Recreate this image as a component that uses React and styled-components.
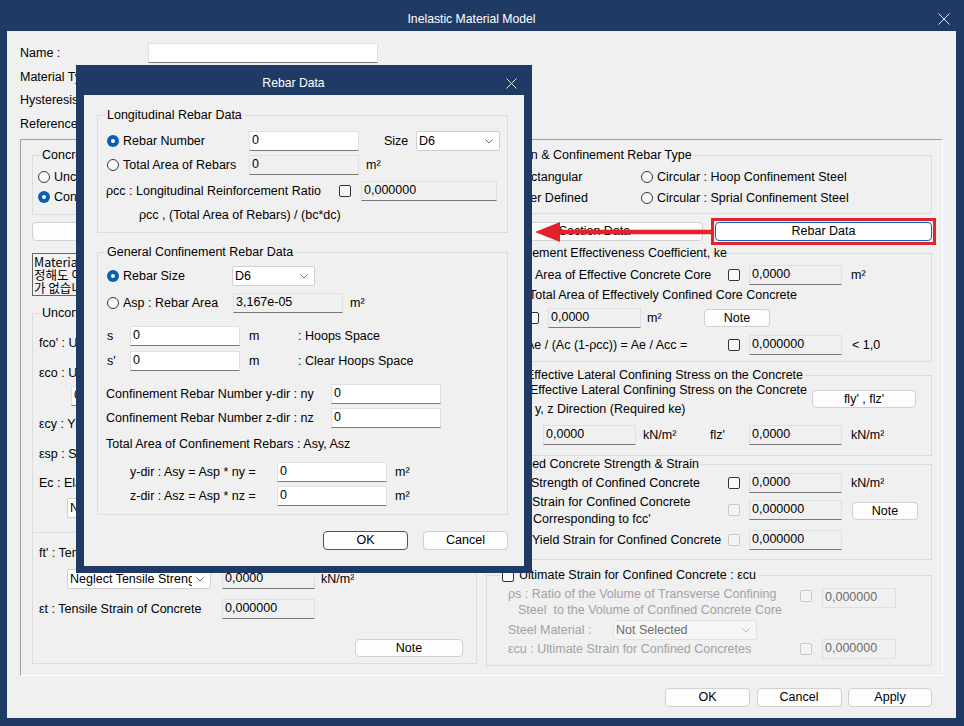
import React from "react"
import styled, { createGlobalStyle, css } from "styled-components"

const BLUE = "#1f3b65"
const RED = "#e5212b"

const GlobalStyle = createGlobalStyle`
  * { box-sizing: border-box; }
  html, body { margin: 0; padding: 0; background: ${BLUE}; }
  body {
    font-family: "Liberation Sans", Arial, sans-serif;
    font-size: 12.5px;
    color: #000;
  }
`

const px = (v, d = 0) => (typeof v === "number" ? v + "px" : v ?? d + "px")

const Window = styled.div`
  position: relative;
  width: 964px;
  height: 726px;
  background: ${BLUE};
  display: flex;
  flex-direction: column;
  overflow: hidden;
`

const TitleBar = styled.div`
  flex-shrink: 0;
  height: ${p => p.$h}px;
  padding-top: 6px;
  display: flex;
  align-items: center;
  color: #fff;
`

const TitleText = styled.div`
  flex: 1;
  text-align: center;
  padding-left: 5px;
  font-size: 12.2px;
`

const CloseSvg = styled.svg`
  flex-shrink: 0;
  margin-right: ${p => p.$mr}px;
`

function CloseIcon({ size, mr }) {
  const e = size - 0.5
  return (
    <CloseSvg $mr={mr} width={size} height={size} viewBox={`0 0 ${size} ${size}`}>
      <path d={`M0.5 0.5L${e} ${e}M${e} 0.5L0.5 ${e}`} stroke="#e4e9f1" strokeWidth="1" />
    </CloseSvg>
  )
}

const Body = styled.div`
  flex: 1;
  margin: 0 8px 8px 7px;
  padding: 12px 13px 0 13px;
  background: #f0f0f0;
  display: flex;
  flex-direction: column;
`

const FormGrid = styled.div`
  display: grid;
  grid-template-columns: 128px 230px;
  grid-auto-rows: 20px;
  row-gap: 3.5px;
  align-items: center;
`

const Frame = styled.div`
  position: relative;
  margin-top: 5.5px;
  height: 537px;
  flex-shrink: 0;
  border-top: 1px solid #a0a0a0;
  border-left: 1px solid #a0a0a0;
  border-right: 1px solid #fff;
  border-bottom: 1px solid #fff;
  padding: 0 9px 0 11px;
  display: grid;
  grid-template-columns: 445px 446px;
  column-gap: 9px;
  align-content: start;
`

const Column = styled.div`
  display: flex;
  flex-direction: column;
  min-width: 0;
`

const Group = styled.div`
  position: relative;
  flex-shrink: 0;
  margin-top: ${p => p.$mt ?? 0}px;
  padding: 0 ${p => p.$pr ?? 6}px ${p => p.$pb ?? 0}px ${p => p.$pl ?? 9}px;
  border: 1px solid #dcdcdc;
  display: flex;
  flex-direction: column;
`

const Legend = styled.div`
  position: absolute;
  top: -8px;
  left: ${p => p.$left ?? 7}px;
  padding: 0 2px;
  line-height: 15px;
  background: #f0f0f0;
  white-space: nowrap;
  display: flex;
  align-items: center;
  gap: 5px;
`

const Row = styled.div`
  flex-shrink: 0;
  display: flex;
  align-items: ${p => (p.$top ? "flex-start" : "center")};
  justify-content: ${p => (p.$end ? "flex-end" : "flex-start")};
  gap: ${p => p.$gap ?? 0}px;
  height: ${p => p.$h ?? 20}px;
  margin-top: ${p => p.$mt ?? 0}px;
  padding-right: ${p => p.$pr ?? 0}px;
  line-height: 15px;
  white-space: nowrap;
`

const Text = styled.span`
  flex-shrink: 0;
  width: ${p => px(p.$w, "auto")};
  margin-left: ${p => p.$ml ?? 0}px;
  color: ${p => (p.$dim ? "#a2a2a2" : "#000")};
  white-space: pre;
  overflow: hidden;
`

const Prefix = styled.span`
  display: inline-block;
  width: ${p => p.$w}px;
  overflow: hidden;
  vertical-align: top;
`

const Lines = styled.div`
  flex-shrink: 0;
  width: ${p => p.$w}px;
  margin-left: ${p => p.$ml ?? 0}px;
  line-height: ${p => p.$lh}px;
  color: ${p => (p.$dim ? "#a2a2a2" : "#000")};
  white-space: pre;
  overflow: hidden;
`

const Line = styled.div`
  padding-left: ${p => p.$indent ?? 0}px;
`

const Choice = styled.span`
  flex-shrink: 0;
  display: flex;
  align-items: center;
  gap: 4px;
  width: ${p => px(p.$w, "auto")};
  margin-left: ${p => p.$ml ?? 0}px;
  white-space: nowrap;
`

const Radio = styled.span`
  flex-shrink: 0;
  width: 12px;
  height: 12px;
  border-radius: 50%;
  border: 1px solid #3a3a3a;
  background: #f8f8f8;
  ${p =>
    p.$on &&
    css`
      border: none;
      background: #0b5fb3;
      display: flex;
      align-items: center;
      justify-content: center;
      &::after {
        content: "";
        width: 4px;
        height: 4px;
        border-radius: 50%;
        background: #fff;
      }
    `}
`

const Check = styled.span`
  flex-shrink: 0;
  width: 12px;
  height: 12px;
  margin-left: ${p => p.$ml ?? 0}px;
  margin-top: ${p => p.$mt ?? 0}px;
  border: 1px solid ${p => (p.$off ? "#c9c9c9" : "#333")};
  border-radius: 2px;
  background: ${p => (p.$off ? "#f4f4f4" : "#f9f9f9")};
`

const Field = styled.div`
  flex-shrink: 0;
  width: ${p => p.$w}px;
  height: 20px;
  margin-left: ${p => p.$ml ?? 0}px;
  margin-top: ${p => p.$mt ?? 0}px;
  padding: 1px 0 0 2px;
  line-height: 15px;
  border: 1px solid #e0e0e0;
  border-bottom-color: ${p => (p.$tone === "off" ? "#e0e0e0" : "#7a7a7a")};
  background: ${p => (p.$tone === "white" ? "#fff" : "#f0f0f0")};
  color: ${p => (p.$tone === "off" ? "#6d6d6d" : "#000")};
  overflow: hidden;
  white-space: nowrap;
`

const ComboBox = styled.div`
  flex-shrink: 0;
  display: flex;
  align-items: center;
  width: ${p => p.$w}px;
  height: 20px;
  margin-left: ${p => p.$ml ?? 0}px;
  padding: 0 6px 0 2px;
  background: ${p => (p.$off ? "#f6f6f6" : "#fff")};
  border: 1px solid ${p => (p.$off ? "#e2e2e2" : "#cfcfcf")};
  border-radius: 2px;
  color: ${p => (p.$off ? "#6d6d6d" : "#000")};

  span {
    flex: 1;
    margin-right: 4px;
    overflow: hidden;
    white-space: nowrap;
  }
`

function Combo({ w, ml, off, children }) {
  return (
    <ComboBox $w={w} $ml={ml} $off={off}>
      <span>{children}</span>
      <svg width="8" height="5" viewBox="0 0 8 5">
        <path d="M0.5 0.5L4 4L7.5 0.5" fill="none" stroke={off ? "#b8b8b8" : "#666"} />
      </svg>
    </ComboBox>
  )
}

const Btn = styled.button`
  flex-shrink: 0;
  width: ${p => px(p.$w, "auto")};
  height: ${p => p.$h ?? 19}px;
  margin-left: ${p => p.$ml ?? 0}px;
  margin-top: ${p => p.$mt ?? 0}px;
  padding: 0;
  font: inherit;
  line-height: 15px;
  color: #000;
  background: #fdfdfd;
  border: 1px solid ${p => (p.$focus ? "#0a64c2" : "#d0d0d0")};
  border-radius: 4px;
`

const ButtonPair = styled.div`
  flex-shrink: 0;
  margin-top: 8px;
  display: grid;
  grid-template-columns: 1fr 1fr;
  column-gap: 12px;
`

const Highlight = styled.div`
  display: flex;
  margin: -4px;
  padding: 1px;
  border: 3px solid ${RED};
`

const TextBox = styled.div`
  flex-shrink: 0;
  margin-top: 12px;
  height: 43px;
  padding: 1px 0 0 1px;
  border: 1px solid #666;
  background: #f3f3f3;
  font-family: "Noto Sans CJK KR", "Liberation Sans", sans-serif;
  font-size: 12.5px;
  line-height: 13px;
  white-space: pre;
  overflow: hidden;
`

const Divider = styled.div`
  flex-shrink: 0;
  height: 1px;
  margin: ${p => p.$mt}px -6px 0 -6px;
  background: #dcdcdc;
`

const ArrowSvg = styled.svg`
  position: absolute;
  left: 512px;
  top: 80px;
  z-index: 2;
`

const Dialog = styled.div`
  position: absolute;
  left: 76px;
  top: 65px;
  width: 456px;
  height: 508px;
  z-index: 5;
  background: ${BLUE};
  display: flex;
  flex-direction: column;
`

const DialogBody = styled.div`
  flex: 1;
  margin: 0 8px 7px 8px;
  padding: 0 16px 0 13px;
  background: #f0f0f0;
  display: flex;
  flex-direction: column;
`

function RebarDialog() {
  return (
    <Dialog>
      <TitleBar $h={30}>
        <TitleText>Rebar Data</TitleText>
        <CloseIcon size={11} mr={15} />
      </TitleBar>
      <DialogBody>
        <Group $mt={20} $pb={7}>
          <Legend>Longitudinal Rebar Data</Legend>
          <Row $mt={15}>
            <Choice $w={142}><Radio $on />Rebar Number</Choice>
            <Field $w={110} $tone="white">0</Field>
            <Text $w={32} $ml={25}>Size</Text>
            <Combo w={84}>D6</Combo>
          </Row>
          <Row $mt={4}>
            <Choice $w={142}><Radio />Total Area of Rebars</Choice>
            <Field $w={110}>0</Field>
            <Text $ml={7}>m²</Text>
          </Row>
          <Row $mt={6}>
            <Text $w={233} $ml={-1}>ρcc : Longitudinal Reinforcement Ratio</Text>
            <Check />
            <Field $w={136} $ml={10}>0,000000</Field>
          </Row>
          <Row $mt={4}>
            <Text $ml={32}>ρcc , (Total Area of Rebars) / (bc*dc)</Text>
          </Row>
        </Group>

        <Group $mt={19} $pb={8}>
          <Legend>General Confinement Rebar Data</Legend>
          <Row $mt={13}>
            <Choice $w={125}><Radio $on />Rebar Size</Choice>
            <Combo w={83}>D6</Combo>
          </Row>
          <Row $mt={7}>
            <Choice $w={126}><Radio />Asp : Rebar Area</Choice>
            <Field $w={110}>3,167e-05</Field>
            <Text $ml={7}>m²</Text>
          </Row>
          <Row $mt={13}>
            <Text $w={23}>s</Text>
            <Field $w={110} $tone="white">0</Field>
            <Text $w={49} $ml={9}>m</Text>
            <Text>: Hoops Space</Text>
          </Row>
          <Row $mt={5}>
            <Text $w={23}>s'</Text>
            <Field $w={110} $tone="white">0</Field>
            <Text $w={49} $ml={9}>m</Text>
            <Text>: Clear Hoops Space</Text>
          </Row>
          <Row $mt={13}>
            <Text $w={225} $ml={-1}>Confinement Rebar Number y-dir : ny</Text>
            <Field $w={110} $tone="white">0</Field>
          </Row>
          <Row $mt={4}>
            <Text $w={225} $ml={-1}>Confinement Rebar Number z-dir : nz</Text>
            <Field $w={110} $tone="white">0</Field>
          </Row>
          <Row $mt={6}>
            <Text $ml={-1}>Total Area of Confinement Rebars : Asy, Asz</Text>
          </Row>
          <Row $mt={8}>
            <Text $w={147} $ml={23}>y-dir : Asy = Asp * ny =</Text>
            <Field $w={110} $tone="white">0</Field>
            <Text $ml={8}>m²</Text>
          </Row>
          <Row $mt={4}>
            <Text $w={147} $ml={23}>z-dir : Asz = Asp * nz =</Text>
            <Field $w={110} $tone="white">0</Field>
            <Text $ml={8}>m²</Text>
          </Row>
        </Group>

        <Row $mt={16} $h={19} $end $gap={15}>
          <Btn $w={85} $focus>OK</Btn>
          <Btn $w={85}>Cancel</Btn>
        </Row>
      </DialogBody>
    </Dialog>
  )
}

function LeftColumn() {
  return (
    <Column>
      <Group $mt={15} $pl={5} $pb={7}>
        <Legend>Concrete Type</Legend>
        <Row $mt={11}>
          <Choice><Radio />Unconfined Concrete</Choice>
        </Row>
        <Row>
          <Choice><Radio $on />Confined Concrete</Choice>
        </Row>
      </Group>

      <Btn $w="100%" $mt={7}>Concrete Data</Btn>

      <TextBox>{"Material 특성 데이터를 수\n정해도 이미 정의된 단면에는 영향\n가 없습니다."}</TextBox>

      <Group $mt={17} $pl={6} $pb={5}>
        <Legend>Unconfined Concrete Properties</Legend>
        <Row $mt={19}><Text>fco' : Unconfined Concrete Strength</Text></Row>
        <Row $mt={10}><Text>εco : Unconfined Concrete Strain at fco'</Text></Row>
        <Row $mt={3}><Field $w={110} $ml={32} $tone="white">0</Field></Row>
        <Row $mt={8}><Text>εcy : Yield Strain of Concrete</Text></Row>
        <Row $mt={10}><Text>εsp : Spalling Strain of Concrete</Text></Row>
        <Row $mt={9}><Text>Ec : Elastic Modulus of Concrete</Text></Row>
        <Row $mt={5}><Combo w={144} ml={28}>Not Selected</Combo></Row>
        <Divider $mt={14} />
        <Row $mt={10}><Text>ft' : Tensile Strength of Concrete</Text></Row>
        <Row $mt={6}>
          <Combo w={144} ml={28}>Neglect Tensile Strength</Combo>
          <Field $w={93} $ml={11}>0,0000</Field>
          <Text $ml={6}>kN/m²</Text>
        </Row>
        <Row $mt={10}>
          <Text $w={183}>εt : Tensile Strain of Concrete</Text>
          <Field $w={93}>0,000000</Field>
        </Row>
        <Row $mt={19}>
          <Btn $w={108} $h={18} $ml={316}>Note</Btn>
        </Row>
      </Group>
    </Column>
  )
}

function RightColumn() {
  return (
    <Column>
      <Group $mt={15} $pb={5}>
        <Legend>Section &amp; Confinement Rebar Type</Legend>
        <Row $mt={11}>
          <Choice $w={142} $ml={3}><Radio />Rectangular</Choice>
          <Choice><Radio />Circular : Hoop Confinement Steel</Choice>
        </Row>
        <Row $mt={1}>
          <Choice $w={142} $ml={3}><Radio />User Defined</Choice>
          <Choice><Radio />Circular : Sprial Confinement Steel</Choice>
        </Row>
      </Group>

      <ButtonPair>
        <Btn $w="100%">Section Data</Btn>
        <Highlight>
          <Btn $w="100%" $focus>Rebar Data</Btn>
        </Highlight>
      </ButtonPair>

      <Group $mt={12} $pb={6}>
        <Legend>Confinement Effectiveness Coefficient, ke</Legend>
        <Row $mt={11}>
          <Text $w={232}><Prefix $w={39}>Ae :</Prefix>Area of Effective Concrete Core</Text>
          <Check />
          <Field $w={93} $ml={9}>0,0000</Field>
          <Text $ml={9}>m²</Text>
        </Row>
        <Row>
          <Text><Prefix $w={33}>Acc :</Prefix>Total Area of Effectively Confined Core Concrete</Text>
        </Row>
        <Row $mt={3}>
          <Check $ml={31} />
          <Field $w={93} $ml={9}>0,0000</Field>
          <Text $w={57} $ml={6}>m²</Text>
          <Btn $w={66} $h={18}>Note</Btn>
        </Row>
        <Row $mt={7}>
          <Text $w={232}><Prefix $w={30}>ke =</Prefix>Ae / (Ac (1-ρcc)) = Ae / Acc =</Text>
          <Check />
          <Field $w={93} $ml={9}>0,000000</Field>
          <Text $ml={10}>&lt; 1,0</Text>
        </Row>
      </Group>

      <Group $mt={13} $pb={10}>
        <Legend><span><Prefix $w={30}>fl' :</Prefix>Effective Lateral Confining Stress on the Concrete</span></Legend>
        <Row $mt={5} $h={38} $top>
          <Lines $w={316} $lh={19}>
            <Line><Prefix $w={34}>fl' :</Prefix>Effective Lateral Confining Stress on the Concrete</Line>
            <Line><Prefix $w={39}>in</Prefix>y, z Direction (Required ke)</Line>
          </Lines>
          <Btn $w={104} $h={18} $mt={9}>fly' , flz'</Btn>
        </Row>
        <Row $mt={6}>
          <Text $w={47}>fly'</Text>
          <Field $w={93}>0,0000</Field>
          <Text $w={67} $ml={7}>kN/m²</Text>
          <Text $w={39}>flz'</Text>
          <Field $w={93}>0,0000</Field>
          <Text $ml={9}>kN/m²</Text>
        </Row>
      </Group>

      <Group $mt={8} $pb={9}>
        <Legend>Confined Concrete Strength &amp; Strain</Legend>
        <Row $mt={8}>
          <Text $w={232}><Prefix $w={35}>fcc' :</Prefix>Strength of Confined Concrete</Text>
          <Check />
          <Field $w={93} $ml={9}>0,0000</Field>
          <Text $ml={9}>kN/m²</Text>
        </Row>
        <Row $mt={1} $h={34} $top>
          <Lines $w={232} $lh={17}>
            <Line><Prefix $w={36}>εcc :</Prefix>Strain for Confined Concrete</Line>
            <Line><Prefix $w={37}></Prefix>Corresponding to fcc'</Line>
          </Lines>
          <Check $off $mt={10} />
          <Field $w={93} $ml={9} $mt={6}>0,000000</Field>
          <Btn $w={66} $h={18} $ml={10} $mt={8}>Note</Btn>
        </Row>
        <Row $mt={2}>
          <Text $w={232}><Prefix $w={36}>εcy :</Prefix>Yield Strain for Confined Concrete</Text>
          <Check $off />
          <Field $w={93} $ml={9}>0,000000</Field>
        </Row>
      </Group>

      <Group $mt={15} $pb={6}>
        <Legend $left={13}><Check />Ultimate Strain for Confined Concrete : εcu</Legend>
        <Row $mt={10} $h={32} $top>
          <Lines $w={292} $ml={12} $lh={16} $dim>
            <Line>ρs : Ratio of the Volume of Transverse Confining</Line>
            <Line $indent={10}>{"Steel  to the Volume of Confined Concrete Core"}</Line>
          </Lines>
          <Check $off $mt={4} />
          <Field $w={74} $ml={10} $mt={2} $tone="off">0,000000</Field>
        </Row>
        <Row $mt={2}>
          <Text $w={105} $ml={12} $dim>Steel Material :</Text>
          <Combo w={144} off>Not Selected</Combo>
        </Row>
        <Row $mt={-1}>
          <Text $w={292} $ml={12} $dim>εcu : Ultimate Strain for Confined Concretes</Text>
          <Check $off />
          <Field $w={74} $ml={10} $tone="off">0,000000</Field>
        </Row>
      </Group>
    </Column>
  )
}

export default function App() {
  return (
    <>
      <GlobalStyle />
      <Window>
        <TitleBar $h={31}>
          <TitleText>Inelastic Material Model</TitleText>
          <CloseIcon size={12} mr={14} />
        </TitleBar>
        <Body>
          <FormGrid>
            <span>Name :</span>
            <Field $w={230} $tone="white" />
            <span>Material Type :</span>
            <Combo w={230}>Concrete</Combo>
            <span>Hysteresis Model :</span>
            <Combo w={230}>Mander Model</Combo>
            <span>Reference :</span>
            <Combo w={230}>Mander et al.</Combo>
          </FormGrid>

          <Frame>
            <LeftColumn />
            <RightColumn />
            <ArrowSvg width="184" height="24" viewBox="0 0 184 24">
              <line x1="24" y1="12" x2="181" y2="12" stroke={RED} strokeWidth="4.5" />
              <polygon points="2,12 27,2 27,22" fill={RED} />
            </ArrowSvg>
          </Frame>

          <Row $mt={12} $h={19} $end $gap={6.5} $pr={11}>
            <Btn $w={85}>OK</Btn>
            <Btn $w={85}>Cancel</Btn>
            <Btn $w={84}>Apply</Btn>
          </Row>
        </Body>
        <RebarDialog />
      </Window>
    </>
  )
}
